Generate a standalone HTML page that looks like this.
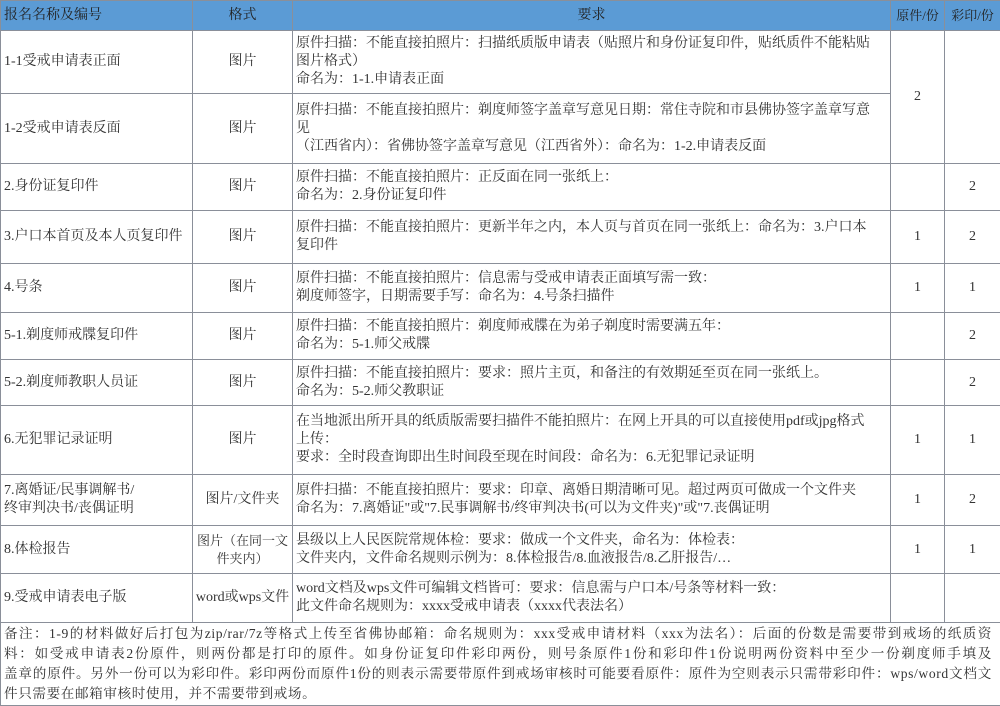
<!DOCTYPE html>
<html><head><meta charset="utf-8"><style>
body{margin:0;width:1000px;height:706px;background:#fff;overflow:hidden}
table{border-collapse:collapse;table-layout:fixed;width:1000px;font-family:"Liberation Serif","Noto Serif CJK SC",serif;font-size:14px;color:#333;}
td{border:1px solid #8a8f99;padding:0 3px;vertical-align:middle;line-height:18px;overflow:hidden}
tr.h td{background:#5b9bd5;color:#222;height:29px;font-size:14px}
.c{text-align:center}
.n{white-space:nowrap;line-height:20px;font-size:13.6px;letter-spacing:0.6px}
.n span{display:block;text-align:justify;text-align-last:justify;width:988px}
.n span.l{text-align-last:left}
</style></head><body>
<table>
<colgroup><col style="width:192px"><col style="width:100px"><col style="width:598px"><col style="width:54px"><col style="width:56px"></colgroup>
<tr class="h"><td>报名名称及编号</td><td class="c">格式</td><td class="c">要求</td><td class="c" style="padding:0;font-size:13px">原件/份</td><td class="c" style="padding:0;font-size:13px">彩印/份</td></tr>
<tr style="height:63px"><td>1-1受戒申请表正面</td><td class="c">图片</td><td>原件扫描：不能直接拍照片：扫描纸质版申请表（贴照片和身份证复印件，贴纸质件不能粘贴<br>图片格式）<br>命名为：1-1.申请表正面</td><td class="c" rowspan="2">2</td><td rowspan="2"></td></tr>
<tr style="height:70px"><td>1-2受戒申请表反面</td><td class="c">图片</td><td>原件扫描：不能直接拍照片：剃度师签字盖章写意见日期：常住寺院和市县佛协签字盖章写意<br>见<br>（江西省内）：省佛协签字盖章写意见（江西省外）：命名为：1-2.申请表反面</td></tr>
<tr style="height:47px"><td>2.身份证复印件</td><td class="c">图片</td><td>原件扫描：不能直接拍照片：正反面在同一张纸上：<br>命名为：2.身份证复印件</td><td></td><td class="c">2</td></tr>
<tr style="height:53px"><td>3.户口本首页及本人页复印件</td><td class="c">图片</td><td>原件扫描：不能直接拍照片：更新半年之内，本人页与首页在同一张纸上：命名为：3.户口本<br>复印件</td><td class="c">1</td><td class="c">2</td></tr>
<tr style="height:49px"><td>4.号条</td><td class="c">图片</td><td>原件扫描：不能直接拍照片：信息需与受戒申请表正面填写需一致：<br>剃度师签字，日期需要手写：命名为：4.号条扫描件</td><td class="c">1</td><td class="c">1</td></tr>
<tr style="height:47px"><td>5-1.剃度师戒牒复印件</td><td class="c">图片</td><td>原件扫描：不能直接拍照片：剃度师戒牒在为弟子剃度时需要满五年：<br>命名为：5-1.师父戒牒</td><td></td><td class="c">2</td></tr>
<tr style="height:46px"><td>5-2.剃度师教职人员证</td><td class="c">图片</td><td>原件扫描：不能直接拍照片：要求：照片主页，和备注的有效期延至页在同一张纸上。<br>命名为：5-2.师父教职证</td><td></td><td class="c">2</td></tr>
<tr style="height:69px"><td>6.无犯罪记录证明</td><td class="c">图片</td><td>在当地派出所开具的纸质版需要扫描件不能拍照片：在网上开具的可以直接使用pdf或jpg格式<br>上传：<br>要求：全时段查询即出生时间段至现在时间段：命名为：6.无犯罪记录证明</td><td class="c">1</td><td class="c">1</td></tr>
<tr style="height:51px"><td>7.离婚证/民事调解书/<br>终审判决书/丧偶证明</td><td class="c">图片/文件夹</td><td>原件扫描：不能直接拍照片：要求：印章、离婚日期清晰可见。超过两页可做成一个文件夹<br>命名为：7.离婚证"或"7.民事调解书/终审判决书(可以为文件夹)"或"7.丧偶证明</td><td class="c">1</td><td class="c">2</td></tr>
<tr style="height:48px"><td>8.体检报告</td><td class="c" style="padding:0;font-size:13px">图片（在同一文<br>件夹内）</td><td>县级以上人民医院常规体检：要求：做成一个文件夹，命名为：体检表：<br>文件夹内，文件命名规则示例为：8.体检报告/8.血液报告/8.乙肝报告/…</td><td class="c">1</td><td class="c">1</td></tr>
<tr style="height:49px"><td>9.受戒申请表电子版</td><td class="c" style="padding:0">word或wps文件</td><td>word文档及wps文件可编辑文档皆可：要求：信息需与户口本/号条等材料一致：<br>此文件命名规则为：xxxx受戒申请表（xxxx代表法名）</td><td></td><td></td></tr>
<tr style="height:83px"><td colspan="5" class="n"><span>备注：1-9的材料做好后打包为zip/rar/7z等格式上传至省佛协邮箱：命名规则为：xxx受戒申请材料（xxx为法名）：后面的份数是需要带到戒场的纸质资</span><span>料：如受戒申请表2份原件，则两份都是打印的原件。如身份证复印件彩印两份，则号条原件1份和彩印件1份说明两份资料中至少一份剃度师手填及</span><span>盖章的原件。另外一份可以为彩印件。彩印两份而原件1份的则表示需要带原件到戒场审核时可能要看原件：原件为空则表示只需带彩印件：wps/word文档文</span><span class="l">件只需要在邮箱审核时使用，并不需要带到戒场。</span></td></tr>
</table>
</body></html>
